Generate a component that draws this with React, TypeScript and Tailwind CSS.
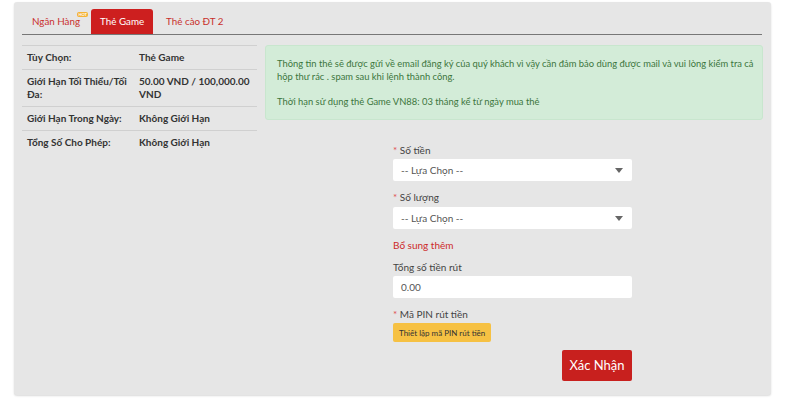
const limits = [
  { label: 'Tùy Chọn:', value: 'Thẻ Game' },
  { label: 'Giới Hạn Tối Thiểu/Tối Đa:', value: '50.00 VND / 100,000.00 VND' },
  { label: 'Giới Hạn Trong Ngày:', value: 'Không Giới Hạn' },
  { label: 'Tổng Số Cho Phép:', value: 'Không Giới Hạn' },
];

function Select() {
  return (
    <div className="h-[22px] bg-white rounded-[2px] flex items-center justify-between pl-2 pr-2 text-[10px] text-[#555]">
      <span>-- Lựa Chọn --</span>
      <svg width="8" height="5" viewBox="0 0 8 5" className="mr-[1px]">
        <path d="M0 0h8L4 5z" fill="#666" />
      </svg>
    </div>
  );
}

export default function App() {
  return (
    <div className="w-[800px] h-[400px] bg-white pt-[2px] pl-[14px]" style={{ fontFamily: 'Lato, "Noto Sans", sans-serif' }}>
      <div className="w-[757px] h-[393px] bg-[#e6e6e6] rounded-[3px] shadow-[0_1px_2px_rgba(0,0,0,0.15)] px-2 pt-[8px]">
        {/* tabs */}
        <div className="flex items-end h-[25px] border-b border-[#777] mr-[1px] text-[9.8px]">
          <div className="relative pl-[10px] pr-[11px] h-[25px] flex items-center text-[#c9302c]">
            Ngân Hàng
            <span className="absolute right-[3px] top-[3px] bg-[#f5b335] text-white text-[4px] leading-[5px] px-[1px] rounded-[2px] font-bold">HOT</span>
          </div>
          <div className="px-[9px] h-[25px] flex items-center bg-[#cd1f1f] text-white rounded-t-[3px]">Thẻ Game</div>
          <div className="px-[13px] h-[25px] flex items-center text-[#c9302c]">Thẻ cào ĐT 2</div>
        </div>

        <div className="flex gap-2 mt-[10px]">
          {/* limits table */}
          <div className="w-[235px] border-t border-[#d0d0d0] text-[10px] font-bold text-[#333]">
            {limits.map((r) => (
              <div key={r.label} className="flex border-b border-[#d0d0d0] last:border-b-0 py-[5px] px-[5px] leading-[13px]">
                <div className="w-[112px] pr-2">{r.label}</div>
                <div className="flex-1">{r.value}</div>
              </div>
            ))}
          </div>

          <div className="flex-1">
            {/* alert */}
            <div className="bg-[#d3ecd8] border border-[#c8e6ce] rounded-[3px] pl-[11px] pr-[8px] pt-[11px] pb-[11px] text-[9.4px] leading-[13px] text-[#3c763d]">
              <p>Thông tin thẻ sẽ được gửi về email đăng ký của quý khách vì vậy cần đảm bảo dùng được mail và vui lòng kiểm tra cả hộp thư rác . spam sau khi lệnh thành công.</p>
              <p className="mt-[12px]">Thời hạn sử dụng thẻ Game VN88: 03 tháng kể từ ngày mua thẻ</p>
            </div>

            {/* form */}
            <div className="w-[239px] ml-[128px] mt-[23px] text-[10px] text-[#444]">
              <div className="leading-[14px] mb-[2px]"><span className="text-[#e05050]">*</span> Số tiền</div>
              <Select />
              <div className="leading-[14px] mt-[9px] mb-[3px]"><span className="text-[#e05050]">*</span> Số lượng</div>
              <Select />
              <div className="leading-[14px] mt-[9px] text-[#cd2a2a]">Bổ sung thêm</div>
              <div className="leading-[14px] mt-[8px] mb-[2px]">Tổng số tiền rút</div>
              <div className="h-[22px] bg-white rounded-[2px] flex items-center pl-2 text-[10px] text-[#555]">0.00</div>
              <div className="leading-[14px] mt-[9px] mb-[2px]"><span className="text-[#e05050]">*</span> Mã PIN rút tiền</div>
              <button className="h-[19px] px-[6px] bg-[#f6c143] rounded-[2px] text-[8px] text-[#333]">Thiết lập mã PIN rút tiền</button>
              <div className="flex justify-end mt-[8px]">
                <button className="w-[70px] h-[31px] bg-[#c8201e] rounded-[2px] text-white text-[13px]">Xác Nhận</button>
              </div>
            </div>
          </div>
        </div>
      </div>
    </div>
  );
}
